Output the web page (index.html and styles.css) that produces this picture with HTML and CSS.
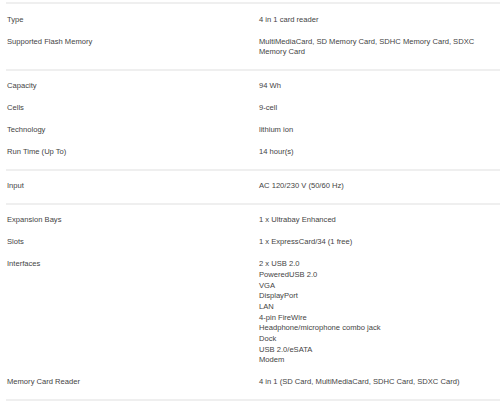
FILE: index.html
```html
<!DOCTYPE html>
<html>
<head>
<meta charset="utf-8">
<link rel="stylesheet" href="styles.css">
</head>
<body>
<div class="specs">
  <div class="section">
    <div class="row"><div class="label">Type</div><div class="value">4 in 1 card reader</div></div>
    <div class="row"><div class="label">Supported Flash Memory</div><div class="value">MultiMediaCard, SD Memory Card, SDHC Memory Card, SDXC Memory Card</div></div>
  </div>
  <div class="section">
    <div class="row"><div class="label">Capacity</div><div class="value">94 Wh</div></div>
    <div class="row"><div class="label">Cells</div><div class="value">9-cell</div></div>
    <div class="row"><div class="label">Technology</div><div class="value">lithium ion</div></div>
    <div class="row"><div class="label">Run Time (Up To)</div><div class="value">14 hour(s)</div></div>
  </div>
  <div class="section">
    <div class="row"><div class="label">Input</div><div class="value">AC 120/230 V (50/60 Hz)</div></div>
  </div>
  <div class="section">
    <div class="row"><div class="label">Expansion Bays</div><div class="value">1 x Ultrabay Enhanced</div></div>
    <div class="row"><div class="label">Slots</div><div class="value">1 x ExpressCard/34 (1 free)</div></div>
    <div class="row"><div class="label">Interfaces</div><div class="value">2 x USB 2.0<br>PoweredUSB 2.0<br>VGA<br>DisplayPort<br>LAN<br>4-pin FireWire<br>Headphone/microphone combo jack<br>Dock<br>USB 2.0/eSATA<br>Modem</div></div>
    <div class="row"><div class="label">Memory Card Reader</div><div class="value">4 in 1 (SD Card, MultiMediaCard, SDHC Card, SDXC Card)</div></div>
  </div>
</div>
</body>
</html>
```

FILE: styles.css
```css
html, body {
  margin: 0;
  padding: 0;
  background: #ffffff;
}
body {
  font-family: "Liberation Sans", Arial, sans-serif;
  font-size: 7.6px;
  line-height: 10.67px;
  color: #444444;
}
.specs {
  padding: 2px 0 0 6px;
}
.section {
  border-top: 2px solid #efefef;
  padding: 5px 0;
}
.section:last-child {
  border-bottom: 2px solid #efefef;
}
.row {
  display: grid;
  grid-template-columns: 252px 236px;
  padding: 5.67px 0 5.67px 1px;
}
```
